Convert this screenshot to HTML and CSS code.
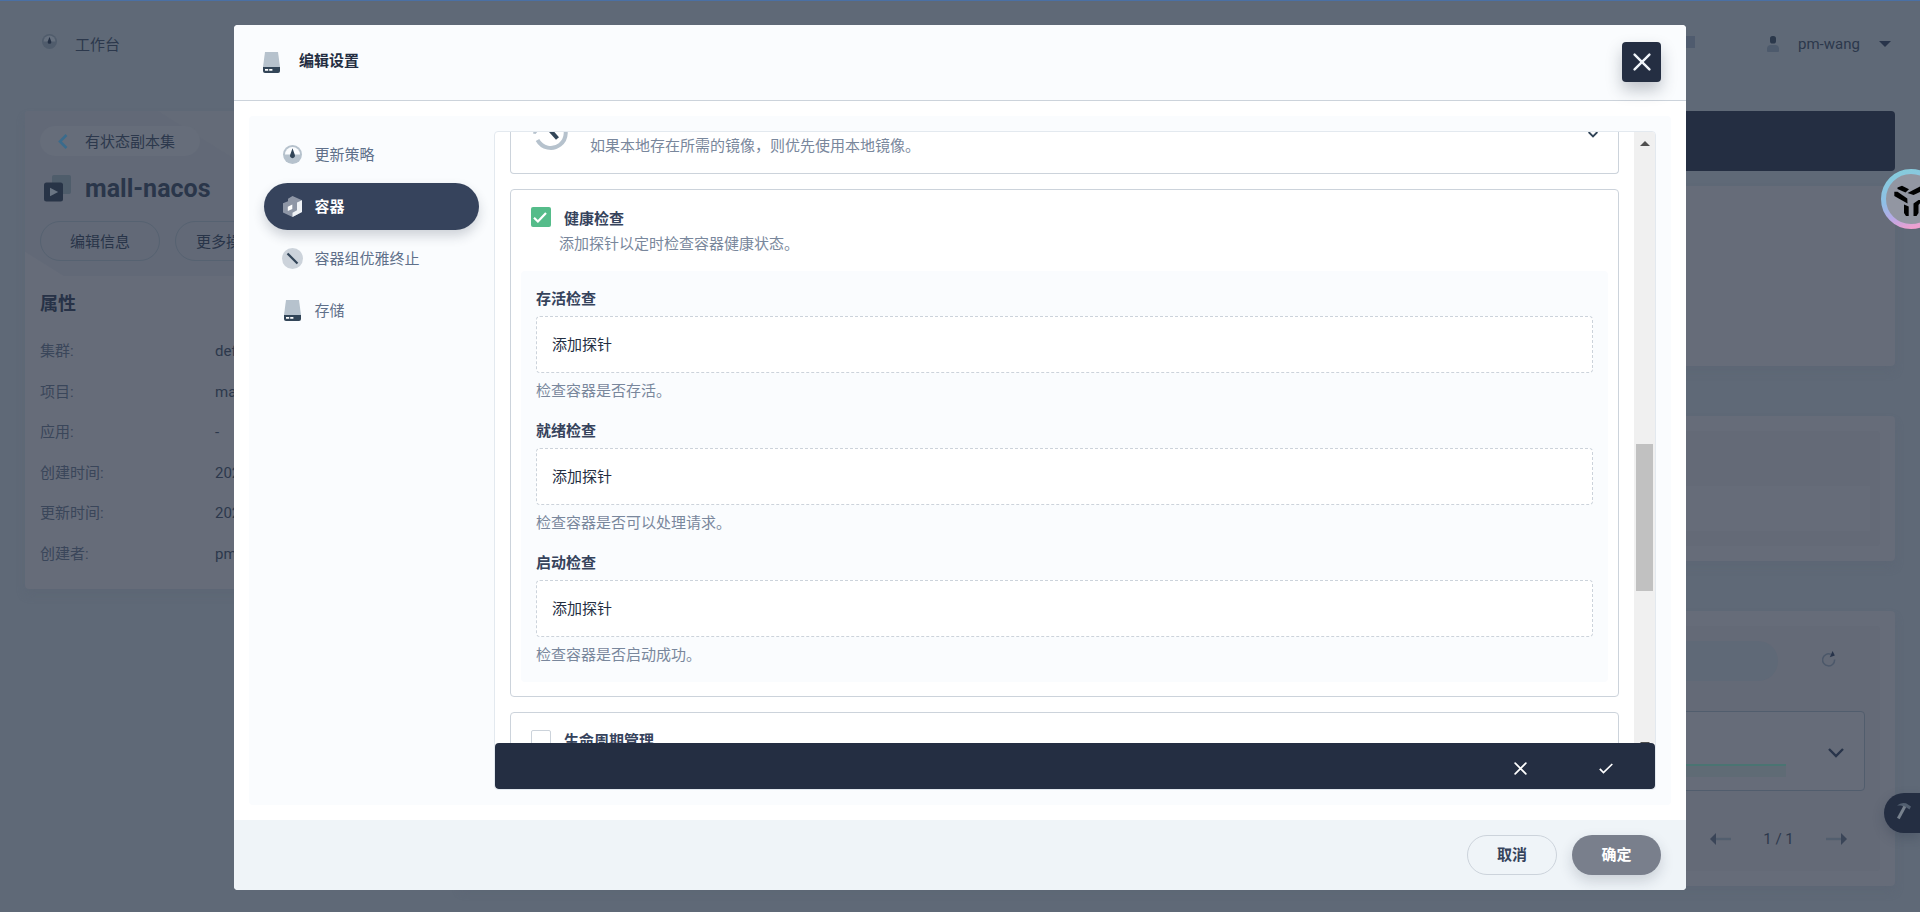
FILE: index.html
```html
<!DOCTYPE html>
<html lang="zh-CN">
<head>
<meta charset="utf-8">
<title>编辑设置</title>
<link rel="stylesheet" href="styles.css">
</head>
<body>
<svg class="defs" width="0" height="0">
  <symbol id="i-disk" viewBox="0 0 17 21"><path fill="#b6c2cd" d="M2 0h13l2 15H0z"/><path fill="#324558" d="M0 15h17v4a2 2 0 0 1-2 2H2a2 2 0 0 1-2-2z"/><path fill="#fff" d="M2 17h3.200v1.800H2zM6.200 17h3.200v1.800H6.200z"/></symbol>
  <symbol id="i-close" viewBox="0 0 18 18"><path fill="none" stroke="currentColor" stroke-width="2.400" stroke-linecap="round" d="M1.600 1.600l14.800 14.800M16.400 1.600L1.600 16.400"/></symbol>
  <symbol id="i-chev" viewBox="0 0 16 10"><path fill="none" stroke="currentColor" stroke-width="2.400" d="M1 1l7 7 7-7"/></symbol>
</svg>

<div class="page">
  <header class="topbar">
    <svg class="top-gauge" width="15" height="15" viewBox="0 0 19 19"><circle cx="9.500" cy="9.500" r="9.500" fill="#505c6c"/><path fill="#66707e" d="M2 9.500a7.500 7.500 0 0 1 15 0z"/><path fill="#243044" d="M9.500 3.500l2.400 6.500a2.400 2.400 0 1 1-4.800 0z"/></svg>
    <span class="top-label">工作台</span>
    <i class="top-doc"></i>
    <div class="user">
      <svg width="12" height="16" viewBox="0 0 12 16"><rect x="3" width="6" height="7.500" rx="2.600" fill="#2b384b"/><path fill="#4d5a6c" d="M0 13a4 4 0 0 1 4-4h4a4 4 0 0 1 4 4v2a1 1 0 0 1-1 1H1a1 1 0 0 1-1-1z"/></svg>
      <span>pm-wang</span>
      <i class="caret"></i>
    </div>
  </header>
  <div class="columns">
    <aside class="side">
      <div class="side-top">
        <div class="back"><svg width="10" height="15" viewBox="0 0 10 15"><path fill="none" stroke="#3a6b8c" stroke-width="2.600" d="M8.500 1L2 7.500 8.500 14"/></svg><span>有状态副本集</span></div>
        <h1 class="name"><svg width="27" height="27" viewBox="0 0 27 27"><rect x="8" width="19" height="19" rx="2" fill="#4f5d6b"/><rect y="7.500" width="19" height="19" rx="2.500" fill="#283447"/><path fill="#6a7583" d="M6 12.800l8.200 4.200L6 21.200z"/></svg>mall-nacos</h1>
        <div class="ops"><span class="op">编辑信息</span><span class="op op-more">更多操作</span></div>
      </div>
      <div class="side-main">
        <h2>属性</h2>
        <dl>
          <dt>集群:</dt><dd>default</dd>
          <dt>项目:</dt><dd>mall</dd>
          <dt>应用:</dt><dd>-</dd>
          <dt>创建时间:</dt><dd>2022</dd>
          <dt>更新时间:</dt><dd>2022</dd>
          <dt>创建者:</dt><dd>pm-wang</dd>
        </dl>
      </div>
    </aside>
    <main class="main">
      <div class="tabs"></div>
      <div class="card card-a"></div>
      <div class="card card-b"><div class="inner"><div class="strip"></div></div></div>
      <div class="card card-c">
        <div class="inner">
          <div class="tools"><div class="search"></div>
            <svg width="14" height="16" viewBox="0 0 14 16"><path fill="none" stroke="#4c586a" stroke-width="1.500" d="M8.800 3.300A6 6 0 1 0 12.600 8.500"/><path fill="#27334a" d="M10.600 0l2.200 4.600-5 1.600z"/></svg>
          </div>
          <div class="pod"><div class="chart"></div><svg width="16" height="10"><use href="#i-chev"/></svg></div>
          <div class="pager">
            <svg width="21" height="12" viewBox="0 0 21 12"><path fill="#3a4558" d="M0 6l6-6v12z"/><path fill="#525e6e" d="M6 4.800h15v2.400H6z"/></svg>
            <span>1 / 1</span>
            <svg width="21" height="12" viewBox="0 0 21 12"><path fill="#3a4558" d="M21 6l-6-6v12z"/><path fill="#525e6e" d="M0 4.800h15v2.400H0z"/></svg>
          </div>
        </div>
      </div>
    </main>
  </div>
</div>

<section class="modal">
  <header class="m-head">
    <svg width="17" height="21"><use href="#i-disk"/></svg>
    <span class="m-title">编辑设置</span>
    <span class="m-close"><svg width="18" height="18"><use href="#i-close"/></svg></span>
  </header>
  <div class="m-body">
    <div class="panel">
      <nav class="nav">
        <div class="nav-item"><svg width="21" height="21" viewBox="0 0 21 21"><circle cx="10.500" cy="10.500" r="9.500" fill="#b6c2cd"/><path fill="#fafcfe" d="M3 10.500a7.500 7.500 0 0 1 15 0z"/><path fill="#324558" d="M10.500 4.200l2.300 6.500a2.500 2.500 0 1 1-4.600 0z"/></svg>更新策略</div>
        <div class="nav-item active"><svg width="21" height="21" viewBox="0 0 21 21"><path fill="#8e96a6" d="M6 2.800L10.500 0 20 4.300V16l-9.500 5L1 16.500V7.200l5-2z"/><path fill="#eff2f6" d="M15 6.500l5-2.200V16l-9.500 5v-4.300l4.500-2.500z"/><path fill="#fff" d="M5.800 10.800l4.500-2.300V13l-4.500 2z"/></svg>容器</div>
        <div class="nav-item"><svg width="21" height="21" viewBox="0 0 21 21"><circle cx="10.500" cy="10.500" r="10.500" fill="#ccd3db"/><path stroke="#324558" stroke-width="2.200" d="M5.500 5.500l10 10"/></svg>容器组优雅终止</div>
        <div class="nav-item"><svg width="21" height="21"><use href="#i-disk"/></svg>存储</div>
      </nav>
      <div class="content">
        <div class="view">
          <div class="scroll">
            <div class="box box-pull">
              <svg class="clock" width="36" height="36" viewBox="0 0 36 36"><path fill="none" stroke="#b6c2cd" stroke-width="4" d="M4.500 25A15 15 0 1 0 5 10"/><path fill="#b6c2cd" d="M0 18.500l1-3.500h5l-3.500 4z"/><path stroke="#324558" stroke-width="4" d="M16.500 14.500l8 9"/></svg>
              <p>如果本地存在所需的镜像，则优先使用本地镜像。</p>
              <svg class="more" width="10" height="7" viewBox="0 0 16 10"><path fill="none" stroke="currentColor" stroke-width="3" d="M1 1l7 7 7-7"/></svg>
            </div>
            <div class="box box-health">
              <div class="check-row"><span class="check on"><svg width="14" height="11" viewBox="0 0 14 11"><path fill="none" stroke="#fff" stroke-width="2.200" d="M1 5.800l3.900 3.700L13 1"/></svg></span><b>健康检查</b></div>
              <p class="desc">添加探针以定时检查容器健康状态。</p>
              <div class="probes">
                <div class="probe"><b>存活检查</b><div class="add">添加探针</div><p>检查容器是否存活。</p></div>
                <div class="probe"><b>就绪检查</b><div class="add">添加探针</div><p>检查容器是否可以处理请求。</p></div>
                <div class="probe"><b>启动检查</b><div class="add">添加探针</div><p>检查容器是否启动成功。</p></div>
              </div>
            </div>
            <div class="box box-life">
              <div class="check-row"><span class="check"></span><b>生命周期管理</b></div>
            </div>
          </div>
          <div class="bar"><i class="up"></i><i class="thumb"></i><i class="down"></i></div>
        </div>
        <div class="actions">
          <svg width="13" height="13" viewBox="0 0 18 18"><use href="#i-close"/></svg>
          <svg width="14" height="11" viewBox="0 0 14 11"><path fill="none" stroke="#fff" stroke-width="1.700" d="M.800 5.800l3.700 3.700L13.300 1"/></svg>
        </div>
      </div>
    </div>
  </div>
  <footer class="m-foot"><span class="btn">取消</span><span class="btn ok">确定</span></footer>
</section>

<div class="float-logo">
  <svg width="60" height="60" viewBox="0 0 60 60">
    <defs><linearGradient id="ring" x1=".3" y1="0" x2=".6" y2="1"><stop offset="0" stop-color="#86cbdc"/><stop offset=".45" stop-color="#8fbfe6"/><stop offset=".75" stop-color="#b9a9e6"/><stop offset="1" stop-color="#f0a0cf"/></linearGradient></defs>
    <circle cx="30" cy="30" r="27.500" fill="#9296a2" stroke="url(#ring)" stroke-width="5"/>
    <g fill="#000"><path d="M16.500 18.500l4.500-1.800 7 3.500-3.500 3.200-8-3.400z"/><path d="M26.500 24L39 17.500h5v3L32.500 26z"/><path d="M13.300 22.700h3.200l9.800 6.800.200 5L13.300 27z"/><path d="M23 35.500l4.700 2V47H25l-2-3z"/><path d="M32.500 34.500l5-3.500h4l-4 5v8l-2 3h-3z"/></g>
  </svg>
</div>
<div class="float-tool">
  <svg width="16" height="18" viewBox="0 0 16 18"><path fill="#525f70" d="M1 3.500Q5 0 10 1.300L15 4.500l-1.500 3-3-2-2.600-.700L5 3.500z"/><path stroke="#77818d" stroke-width="3" d="M8.800 4.500L2.300 16.500"/></svg>
</div>
</body>
</html>
```
FILE: styles.css
```css
* { box-sizing: border-box; }
body {
  margin: 0;
  width: 1920px;
  height: 912px;
  overflow: hidden;
  position: relative;
  background: #5f6977;
  font: 15px/20px Roboto, "Noto Sans CJK SC", sans-serif;
  color: #36435c;
}
p, h1, h2, dl, dd { margin: 0; }
svg { display: block; flex: none; }
i { display: block; }
.defs { position: absolute; }

.page { height: 912px; border-top: 1px solid #4a70a5; color: #2c384c; }
.topbar { height: 110px; padding: 33px 29px 0 42px; display: flex; align-items: flex-start; }
.top-label { margin: 1px 0 0 18px; }
.top-doc { width: 40px; height: 12px; margin: 2px 0 0 auto; background: #4f5b6e; }
.user { margin-left: 72px; display: flex; align-items: center; }
.user span { margin: 0 19px; width: 62px; }
.caret { border: 6px solid transparent; border-top-color: #28344a; border-bottom: 0; }

.columns { display: flex; gap: 15px; padding: 0 25px; }
.side { width: 420px; height: 478px; border-radius: 4px; background: #666c79; box-shadow: 0 6px 8px #59637255; }
.side-top {
  height: 165px;
  padding: 15px;
  border-radius: 4px 4px 0 0;
  background: linear-gradient(32deg, #666c79 20px, #626977 21px 210px, #646b78 211px);
}
.back { width: 160px; height: 30px; border-radius: 15px; background: #666d7a; padding-left: 18px; display: flex; align-items: center; gap: 17px; }
.back span { margin-top: 2px; }
.name { margin: 18px 0 18px 4px; height: 29px; display: flex; align-items: center; gap: 14px; font-size: 25px; font-weight: 700; color: #2a364a; }
.ops { display: flex; gap: 15px; }
.op { width: 120px; height: 40px; border: 1px solid #566271; border-radius: 20px; text-align: center; line-height: 40px; color: #283448; }
.op-more { text-align: left; padding-left: 20px; }
.side-main { padding: 16px 15px; }
.side h2 { font-size: 18px; line-height: 24px; margin-bottom: 15px; color: #273247; }
dl { display: grid; grid-template-columns: 175px 1fr; grid-auto-rows: 40.600px; line-height: 40px; }
dt { color: #3a465a; }

.main { flex: 1; }
.tabs { height: 60px; border-radius: 4px; background: #242e42; }
.card { border-radius: 4px; background: #666c79; box-shadow: 0 6px 8px #59637255; padding: 15px; }
.card-a { height: 180px; margin-top: 15px; }
.card-b { height: 145px; margin-top: 50px; }
.card-c { height: 275px; margin-top: 50px; }
.inner { height: 100%; background: #646a77; border-radius: 4px; }
.card-b .inner { padding: 55px 10px 15px; }
.strip { height: 45px; background: #666c79; }
.card-c .inner { padding: 15px; }
.tools { display: flex; align-items: center; }
.search { width: 1288px; height: 40px; border-radius: 20px; background: #5f6977; margin-right: 44px; }
.tools svg { margin-top: -4px; }
.pod { height: 80px; margin-top: 30px; border: 1px solid #515d6d; border-radius: 4px; background: #666c79; display: flex; align-items: center; padding-right: 20px; }
.pod svg { margin: 3px 0 0 42px; color: #28344a; }
.chart { flex: 1; height: 13px; margin-top: 39px; border-top: 2px solid #4a7472; background: #5f6b75; }
.pager { display: flex; justify-content: flex-end; align-items: center; margin-top: 38px; padding-right: 18px; height: 20px; }
.pager span { width: 95px; text-align: center; }

.modal { position: absolute; left: 234px; top: 25px; width: 1452px; height: 865px; border-radius: 4px; overflow: hidden; background: #fff; display: flex; flex-direction: column; }
.m-head { height: 76px; background: #fafcfe; border-bottom: 1px solid #ccd3db; padding: 17px 25px 0 29px; display: flex; align-items: flex-start; }
.m-head > svg { margin-top: 10px; }
.m-title { margin: 9px 0 0 19px; font-weight: 700; color: #242e42; }
.m-close { margin-left: auto; width: 39px; height: 40px; border-radius: 4px; background: #242e42; color: #eff4f9; display: flex; align-items: center; justify-content: center; box-shadow: 0 8px 16px rgba(36, 46, 66, .28); z-index: 1; }
.m-body { flex: 1; padding: 15px; }
.panel { height: 689px; padding: 15px; border-radius: 4px; background: #fafcfe; display: flex; gap: 15px; }
.nav { width: 215px; display: flex; flex-direction: column; gap: 5px; }
.nav-item { height: 47px; border-radius: 24px; padding-left: 18px; display: flex; align-items: center; gap: 11.500px; color: #5f708a; }
.nav-item.active { background: #36435c; color: #fff; font-weight: 700; box-shadow: 0 6px 12px rgba(36, 46, 66, .2); }
.content { flex: 1; border: 1px solid #e3e9ef; border-radius: 4px; background: #fff; display: flex; flex-direction: column; overflow: hidden; }
.view { height: 611px; display: flex; overflow: hidden; }
.scroll { flex: 1; padding: 0 15px; }
.box { border: 1px solid #ccd3db; border-radius: 4px; margin-bottom: 15px; }
.box-pull { height: 42px; border-top: 0; border-radius: 0 0 4px 4px; display: flex; padding: 0 20px 0 22px; overflow: hidden; }
.clock { margin-top: -17px; }
.box-pull p { margin: 4px auto 0 21px; color: #79879c; }
.more { color: #324558; margin-top: -1px; }
.box-health { height: 508px; padding: 17px 10px 0; }
.check-row { display: flex; gap: 13px; padding-left: 10px; }
.box b { font-weight: 700; }
.check-row b { margin-top: 2px; }
.check { width: 20px; height: 20px; border: 1px solid #ccd3db; border-radius: 2px; }
.check.on { border: 0; background: #55bc8a; display: flex; align-items: center; padding-left: 2px; }
.desc { margin: 5px 0 17px 38px; color: #79879c; }
.probes { height: 411px; border-radius: 4px; background: #fafcfe; padding: 17px 15px 0; }
.probe { height: 132px; }
.probe b { display: block; line-height: 22px; }
.add { height: 57px; margin-top: 6px; padding-left: 15px; line-height: 56px; border: 1px dashed #ccd3db; border-radius: 4px; background: #fff; color: #242e42; }
.probe p { margin-top: 8px; color: #79879c; }
.box-life { height: 100px; padding: 17px 10px 0; }
.box-life b { margin-top: 1px; }
.bar { width: 21px; background: #f0f0f0; padding: 9px 2px 0; display: flex; flex-direction: column; flex: none; }
.up, .down { margin-left: 4px; border: 5px solid transparent; width: 10px; }
.up { border-bottom-color: #505050; border-top: 0; }
.down { border-top-color: #505050; border-bottom: 0; margin-top: 151px; flex: none; }
.thumb { height: 147px; margin-top: 298px; background: #c1c1c1; width: 17px; flex: none; }
.actions { height: 46px; flex: none; border-radius: 4px; background: #242e42; color: #fff; display: flex; justify-content: flex-end; align-items: center; gap: 72px; padding: 4px 42px 0 0; }
.m-foot { height: 70px; background: #eff4f8; display: flex; justify-content: flex-end; gap: 15px; padding: 15px 25px 0 0; }
.btn { width: 90px; height: 40px; border: 1px solid #ccd3db; border-radius: 20px; text-align: center; line-height: 38px; font-weight: 700; }
.btn.ok { width: 89px; border: 0; line-height: 40px; background: #797f8c; color: #fff; box-shadow: 0 6px 14px rgba(36, 46, 66, .18); }

.float-logo { position: absolute; left: 1881px; top: 169px; width: 39px; height: 60px; overflow: hidden; }
.float-tool { position: absolute; left: 1884px; top: 793px; width: 36px; height: 40px; border-radius: 20px 0 0 20px; background: #242e42; padding: 9px 0 0 12px; box-shadow: 0 5px 12px rgba(36, 46, 66, .25); }
```
